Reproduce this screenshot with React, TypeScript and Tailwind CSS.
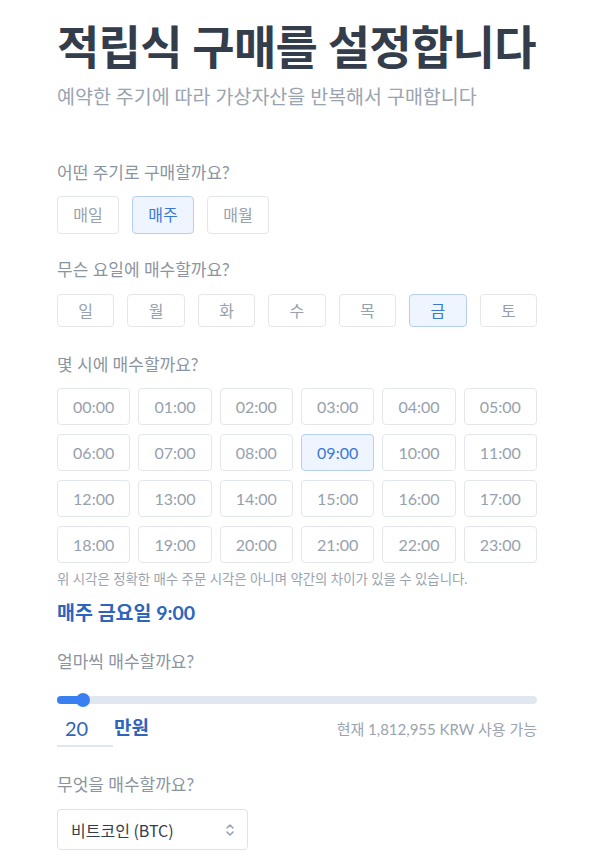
import { useState } from "react";

const FREQS = ["매일", "매주", "매월"];
const DAYS = ["일", "월", "화", "수", "목", "금", "토"];
const HOURS = Array.from({ length: 24 }, (_, i) => `${String(i).padStart(2, "0")}:00`);

const font = "font-['Lato','Noto_Sans_CJK_KR',sans-serif]";

const Label = ({ children }: { children: React.ReactNode }) => (
  <h2 className="text-[17px] leading-[24px] text-[#8b95a1]">{children}</h2>
);

const Chip = ({
  active,
  onClick,
  className,
  children,
}: {
  active: boolean;
  onClick: () => void;
  className?: string;
  children: React.ReactNode;
}) => (
  <button
    onClick={onClick}
    className={`flex items-center justify-center rounded-[4px] border ${
      active
        ? "border-[#b5cff0] bg-[#eef5fe] text-[#3a78d4]"
        : "border-[#e3e7eb] bg-white text-[#97a1ad]"
    } ${className ?? ""}`}
  >
    {children}
  </button>
);

const App = () => {
  const [freq, setFreq] = useState("매주");
  const [day, setDay] = useState("금");
  const [hour, setHour] = useState("09:00");
  const [amount, setAmount] = useState("20");

  return (
    <div className={`min-h-screen w-full bg-white pl-[57px] pr-[55px] pt-[19px] ${font}`}>
      <h1 className="whitespace-nowrap text-[46px] font-bold leading-[55px] tracking-[-0.7px] text-[#333d4b]">
        적립식 구매를 설정합니다
      </h1>
      <p className="mt-[10px] text-[19.5px] leading-[26px] text-[#9aa4b0]">
        예약한 주기에 따라 가상자산을 반복해서 구매합니다
      </p>

      <section className="mt-[51px]">
        <Label>어떤 주기로 구매할까요?</Label>
        <div className="mt-[11px] flex gap-[13px]">
          {FREQS.map((f) => (
            <Chip
              key={f}
              active={freq === f}
              onClick={() => setFreq(f)}
              className="h-[38px] w-[62px] text-[16px]"
            >
              {f}
            </Chip>
          ))}
        </div>
      </section>

      <section className="mt-[24px]">
        <Label>무슨 요일에 매수할까요?</Label>
        <div className="mt-[12px] flex gap-[13px]">
          {DAYS.map((d) => (
            <Chip
              key={d}
              active={day === d}
              onClick={() => setDay(d)}
              className="h-[33px] flex-1 text-[16px]"
            >
              {d}
            </Chip>
          ))}
        </div>
      </section>

      <section className="mt-[26px]">
        <Label>몇 시에 매수할까요?</Label>
        <div className="mt-[11px] grid grid-cols-6 gap-x-[8px] gap-y-[9px]">
          {HOURS.map((h) => (
            <Chip
              key={h}
              active={hour === h}
              onClick={() => setHour(h)}
              className="h-[37px] text-[16px]"
            >
              {h}
            </Chip>
          ))}
        </div>
        <p className="mt-[7px] text-[13.4px] leading-[18px] text-[#9aa4b0]">
          위 시각은 정확한 매수 주문 시각은 아니며 약간의 차이가 있을 수 있습니다.
        </p>
        <p className="mt-[11px] text-[19.5px] font-bold leading-[28px] text-[#2d64bc]">
          {freq} {day}요일 {parseInt(hour, 10)}:00
        </p>
      </section>

      <section className="mt-[23px]">
        <Label>얼마씩 매수할까요?</Label>
        <div className="relative mt-[18px] flex h-[16px] items-center">
          <div className="h-[8px] w-full rounded-full bg-[#e1e7ee]">
            <div className="h-full w-[26px] rounded-full bg-[#3a7ff0]" />
          </div>
          <div className="absolute left-[19px] top-[1px] h-[14px] w-[14px] rounded-full bg-[#3a7ff0]" />
        </div>
        <div className="mt-[3px] flex items-end justify-between">
          <div className="flex items-center">
            <input
              value={amount}
              onChange={(e) => setAmount(e.target.value)}
              className="h-[36px] w-[56px] border-b-2 border-[#e1e7ee] bg-transparent pl-[8px] text-left text-[20px] text-[#2d64bc] outline-none"
            />
            <span className="ml-[1px] pb-[2px] text-[19px] font-bold text-[#2d64bc]">만원</span>
          </div>
          <span className="pb-[7px] text-[15px] text-[#9aa4b0]">현재 1,812,955 KRW 사용 가능</span>
        </div>
      </section>

      <section className="mt-[26px]">
        <Label>무엇을 매수할까요?</Label>
        <div className="mt-[12px] flex h-[41px] w-[191px] items-center justify-between rounded-[4px] border border-[#dfe3e8] pl-[13px] pr-[12px]">
          <span className="font-['Noto_Sans_CJK_KR',sans-serif] text-[16px] text-[#333d4b]">
            비트코인 (BTC)
          </span>
          <svg width="10" height="16" viewBox="0 0 10 16" fill="none" stroke="#9aa4b0" strokeWidth="1.6" strokeLinecap="round" strokeLinejoin="round">
            <path d="M2 6l3-3 3 3" />
            <path d="M2 10l3 3 3-3" />
          </svg>
        </div>
      </section>
    </div>
  );
};

export default App;
